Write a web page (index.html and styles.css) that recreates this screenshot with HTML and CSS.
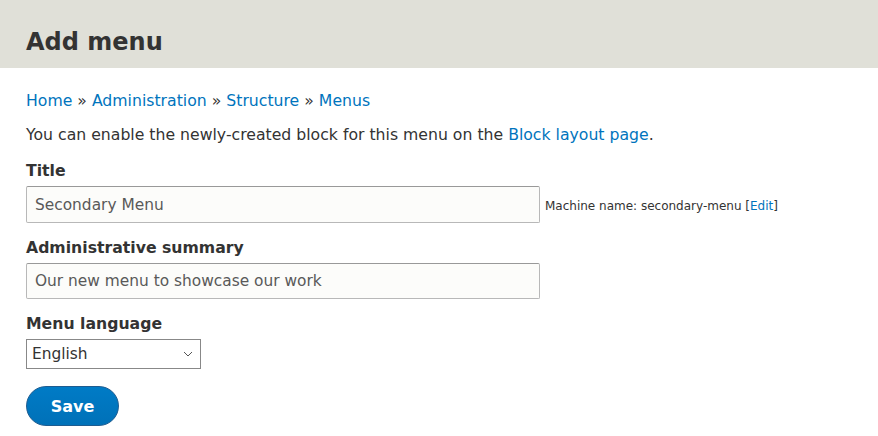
FILE: index.html
```html
<!DOCTYPE html>
<html lang="en">
<head>
    <meta charset="UTF-8">
    <title>Add menu</title>
    <link rel="stylesheet" href="styles.css">
</head>
<body>
    <!-- Page title -->
    <header class="page-header">
        <h1>Add menu</h1>
    </header>

    <main class="content">
        <nav class="breadcrumb">
            <a href="#">Home</a> » <a href="#">Administration</a> » <a href="#">Structure</a> » <a href="#">Menus</a>
        </nav>

        <p class="help">You can enable the newly-created block for this menu on the <a href="#">Block layout page</a>.</p>

        <form class="menu-form">
            <div class="form-item">
                <label for="title">Title</label>
                <div class="field-row">
                    <input type="text" id="title" class="form-text" value="Secondary Menu">
                    <span class="machine-name">Machine name: secondary-menu [<a href="#">Edit</a>]</span>
                </div>
            </div>

            <div class="form-item">
                <label for="summary">Administrative summary</label>
                <input type="text" id="summary" class="form-text summary" value="Our new menu to showcase our work">
            </div>

            <div class="form-item">
                <label for="langcode">Menu language</label>
                <div class="select-wrap">
                    <select id="langcode" class="form-select">
                        <option>English</option>
                    </select>
                    <svg class="select-arrow" width="10" height="6" viewBox="0 0 10 6"><path d="M1 1l4 4 4-4" fill="none" stroke="#555" stroke-width="1"/></svg>
                </div>
            </div>

            <button type="button" class="button-primary">Save</button>
        </form>
    </main>
</body>
</html>
```

FILE: styles.css
```css
/* Global */
* {
    box-sizing: border-box;
    margin: 0;
    padding: 0;
}
body {
    font-family: "DejaVu Sans", "Liberation Sans", sans-serif;
    color: #333;
    background: #fff;
    font-size: 15.7px;
}
a {
    color: #0074bd;
    text-decoration: none;
}

/* Header */
.page-header {
    background-color: #e0e0d8;
    height: 68px;
    padding: 26px 26px 0;
}
.page-header h1 {
    font-size: 24px;
    font-weight: bold;
    line-height: 32px;
    color: #333;
}

/* Content */
.content {
    padding: 23px 26px 0;
}
.breadcrumb {
    line-height: 20px;
    color: #333;
}
.help {
    margin-top: 14px;
    line-height: 20px;
}

/* Form */
.menu-form {
    margin-top: 16px;
    display: flex;
    flex-direction: column;
    align-items: flex-start;
}
.form-item {
    margin-bottom: 15px;
}
.form-item label {
    display: block;
    font-weight: bold;
    line-height: 20px;
    margin-bottom: 5px;
}
.field-row {
    display: flex;
    align-items: center;
}
.form-text {
    width: 514px;
    height: 37px;
    padding: 0 8px;
    border: 1px solid #b8b8b8;
    border-top-color: #999;
    border-radius: 2px;
    background: #fcfcfa;
    font-family: inherit;
    font-size: 15.4px;
    color: #595959;
}
.form-text.summary {
    height: 36px;
}
.machine-name {
    font-size: 12px;
    margin-left: 5px;
    margin-top: 3px;
}
.select-wrap {
    position: relative;
    width: 175px;
}
.form-select {
    width: 175px;
    height: 30px;
    padding: 0 5px;
    border: 1px solid #888;
    border-radius: 0;
    background: #fff;
    font-family: inherit;
    font-size: 15.4px;
    color: #333;
    appearance: none;
}
.select-arrow {
    position: absolute;
    right: 8px;
    top: 12px;
}
.button-primary {
    margin-top: 2px;
    width: 93px;
    height: 40px;
    border: 1px solid #1e5c90;
    border-radius: 20px;
    background: linear-gradient(#007bc6, #0071b8);
    color: #fff;
    font-family: inherit;
    font-size: 16px;
    font-weight: bold;
    cursor: pointer;
}
```
